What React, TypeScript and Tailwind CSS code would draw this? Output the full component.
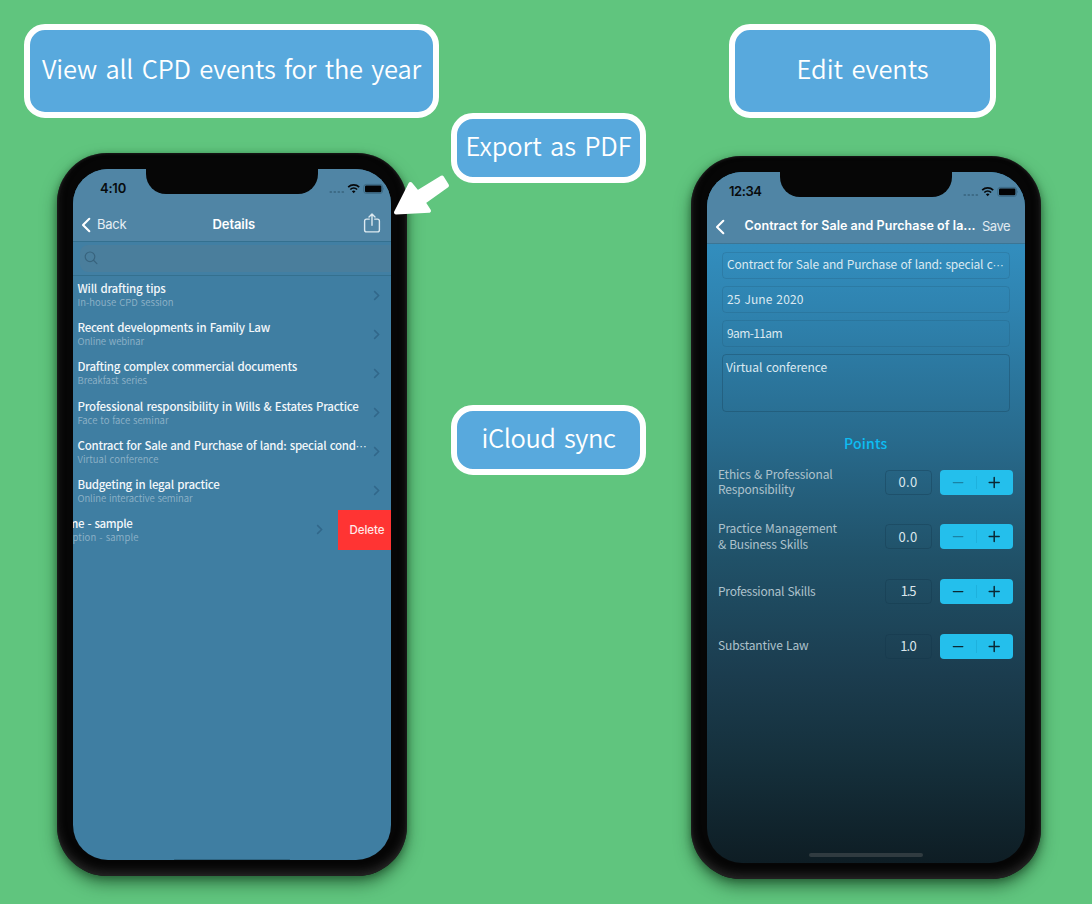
import { useLayoutEffect, useRef, type ReactNode } from "react";

/** Single line of text whose tracking is adjusted so it fills a given width. */
function Fit({ w, className = "", clipped = false, children }: { w: number; className?: string; clipped?: boolean; children: string }) {
  const ref = useRef<HTMLSpanElement>(null);
  useLayoutEffect(() => {
    const el = ref.current;
    if (!el) return;
    el.style.letterSpacing = "0px";
    const natural = el.getBoundingClientRect().width;
    el.style.letterSpacing = `${(w - natural) / (children.length + (clipped ? 1 : 0))}px`;
  }, [w, children, clipped]);
  return (
    <span ref={ref} className={`inline-block shrink-0 whitespace-nowrap ${className}`}>
      {children}
      {clipped && <span className="font-['DejaVu_Sans'] text-[11px] leading-none">⋯</span>}
    </span>
  );
}

function Callout({ className, children }: { className: string; children: ReactNode }) {
  return (
    <div
      className={`flex shrink-0 items-center justify-center border-[6px] border-white bg-[#58a9dd] pb-[7px] text-[25.5px] leading-none font-[350] text-white [word-spacing:3px] ${className}`}
    >
      {children}
    </div>
  );
}

function StatusIcons() {
  return (
    <svg width="56" height="12" viewBox="0 0 56 12" className="shrink-0">
      <g fill="#3d6b86">
        <rect x="0.5" y="8" width="2.6" height="2" rx="0.8" />
        <rect x="4.5" y="8" width="2.6" height="2" rx="0.8" />
        <rect x="8.5" y="8" width="2.6" height="2" rx="0.8" />
        <rect x="12.5" y="8" width="2.6" height="2" rx="0.8" />
      </g>
      <g fill="none" stroke="#07090b" strokeWidth="1.7">
        <path d="M19.2 4.1a8 8 0 0 1 11 0" />
        <path d="M21.3 6.5a5 5 0 0 1 6.8 0" />
      </g>
      <path d="M22.9 8.2a2.7 2.7 0 0 1 3.6 0L24.7 10.2Z" fill="#07090b" />
      <rect x="34.8" y="1.4" width="18.8" height="9" rx="2.4" fill="none" stroke="#3d6b86" strokeWidth="1" />
      <rect x="36" y="2.5" width="16.4" height="6.8" rx="1.2" fill="#020304" />
      <path d="M54.4 4.5q1.2 1.3 0 2.7Z" fill="#35617b" />
    </svg>
  );
}

function BackChevron() {
  return (
    <svg width="10" height="16" viewBox="0 0 10 16" className="shrink-0">
      <path d="M8.3 1.8 2 8l6.3 6.2" fill="none" stroke="#fff" strokeWidth="2.1" strokeLinecap="round" strokeLinejoin="round" />
    </svg>
  );
}

function ShareIcon() {
  return (
    <svg width="18" height="20" viewBox="0 0 18 20" className="mb-[2.5px] shrink-0">
      <g fill="none" stroke="#dce9f0" strokeWidth="1.4" strokeLinecap="round" strokeLinejoin="round">
        <path d="M6.3 6.1H3.6a2 2 0 0 0-2 2v8.8a2 2 0 0 0 2 2h10.8a2 2 0 0 0 2-2V8.1a2 2 0 0 0-2-2h-2.7" />
        <path d="M9 12.2V1.2M6 4l3-3 3 3" />
      </g>
    </svg>
  );
}

function Disclosure() {
  return (
    <svg width="7" height="11" viewBox="0 0 7 11" className="shrink-0">
      <path d="m1.2 1.1 4.4 4.4-4.4 4.4" fill="none" stroke="#31678a" strokeWidth="1.5" />
    </svg>
  );
}

function Phone({ screen, time, timeWidth, timePad, children }: { screen: string; time: string; timeWidth: number; timePad: string; children: ReactNode }) {
  return (
    <div className="h-[723px] w-[350.5px] shrink-0 rounded-[50px] bg-[#060606] p-4 shadow-[inset_0_-5px_8px_#242424,inset_0_0_3px_#2a2a2a,0_8px_16px_rgba(15,55,25,0.55),0_2px_7px_rgba(10,50,20,0.4)]">
      <div className={`relative flex h-[691px] w-[318.5px] flex-col overflow-hidden rounded-[35px] ${screen}`}>
        <div className={`flex h-[38px] shrink-0 items-center justify-between bg-[#5085a5] pt-[1.5px] pr-[6.5px] ${timePad}`}>
          <Fit w={timeWidth} className="font-['Inter'] text-[13px] font-semibold text-[#080b0d]">{time}</Fit>
          <StatusIcons />
        </div>
        <div className="absolute top-0 left-[73px] h-[24.5px] w-[172px] rounded-b-[20px] bg-[#060606]" />
        {children}
      </div>
    </div>
  );
}

const events = [
  { title: "Will drafting tips", tw: 88, sub: "In-house CPD session", sw: 96 },
  { title: "Recent developments in Family Law", tw: 192.5, sub: "Online webinar", sw: 66.5 },
  { title: "Drafting complex commercial documents", tw: 219.5, sub: "Breakfast series", sw: 69.5 },
  { title: "Professional responsibility in Wills & Estates Practice", tw: 281, sub: "Face to face seminar", sw: 91 },
  { title: "Contract for Sale and Purchase of land: special cond", clipped: true, tw: 289, sub: "Virtual conference", sw: 81 },
  { title: "Budgeting in legal practice", tw: 142, sub: "Online interactive seminar", sw: 115 },
];

const titleClass = "h-[15px] text-[11.5px] leading-[15px] font-medium text-[#f2f7fa] [word-spacing:1px]";
const subClass = "h-[13px] text-[9.5px] leading-[13px] font-[350] text-[#8fb3c8] [word-spacing:0.8px]";

function DetailsScreen() {
  return (
    <>
      <div className="flex h-[34px] shrink-0 items-center bg-[#5085a5] pt-px pr-[10px] pl-[8.5px] font-['Inter']">
        <div className="flex w-[130px] items-center gap-[6px]">
          <BackChevron />
          <Fit w={29.5} className="text-[13px] text-[#e6eff4]">Back</Fit>
        </div>
        <Fit w={42.5} className="ml-[1.5px] text-[13px] font-semibold text-white">Details</Fit>
        <div className="ml-auto">
          <ShareIcon />
        </div>
      </div>
      <div className="flex h-[34.5px] shrink-0 items-center border-y border-[#34708f] bg-[#417fa3] pl-[7px]">
        <div className="flex h-[27px] flex-1 items-center rounded-l-lg bg-[#4a7e9c] pl-[4px]">
          <svg width="14" height="14" viewBox="0 0 14 14">
            <g fill="none" stroke="#38637d" strokeWidth="1.2" strokeLinecap="round">
              <circle cx="6" cy="5.8" r="4.8" />
              <path d="m9.5 9.3 3.4 3.3" />
            </g>
          </svg>
        </div>
      </div>
      <div className="flex flex-col">
        {events.map((e) => (
          <div key={e.title} className="flex h-[39.1px] items-center justify-between pr-[11px] pl-[5px]">
            <div className="flex w-[290px] flex-col items-start pt-[0.5px]">
              <Fit w={e.tw} clipped={e.clipped} className={titleClass}>{e.title}</Fit>
              <Fit w={e.sw} className={subClass}>{e.sub}</Fit>
            </div>
            <Disclosure />
          </div>
        ))}
        <div className="flex h-[39.5px] items-center">
          <div className="flex w-[66px] flex-col items-end overflow-hidden">
            <Fit w={65} className={`mr-[6px] ${titleClass}`}>me - sample</Fit>
            <Fit w={66} className={subClass}>ption - sample</Fit>
          </div>
          <div className="ml-[177px]">
            <Disclosure />
          </div>
          <div className="ml-auto flex h-full w-[53px] items-center justify-center bg-[#ff3433] pt-px pl-[5px]">
            <Fit w={35} className="font-['Inter'] text-[11.5px] font-medium text-[#ffe9e9]">Delete</Fit>
          </div>
        </div>
      </div>
      <div className="mx-auto mt-auto h-px w-[116px] rounded-full bg-[#2f6481]" />
    </>
  );
}

const points = [
  { lines: ["Ethics & Professional", "Responsibility"], widths: [114.5, 76.5], value: "0.0", vw: 19, minus: "#1a83a5" },
  { lines: ["Practice Management", "& Business Skills"], widths: [119, 90], value: "0.0", vw: 19, minus: "#1a83a5" },
  { lines: ["Professional Skills"], widths: [97.5], value: "1.5", vw: 14.5, minus: "#0b2935" },
  { lines: ["Substantive Law"], widths: [90.5], value: "1.0", vw: 15.5, minus: "#0b2935" },
];

const fieldClass = "flex h-[27px] items-center rounded-[4px] border border-[#1d4c66]/20 pb-px pl-[4.5px]";
const fieldText = "text-[12px] leading-none text-[#dbe9f1] [word-spacing:1px]";

function EditScreen() {
  return (
    <>
      <div className="flex h-[33px] shrink-0 items-center bg-[#5085a5] pr-[15px] pl-[8.5px] font-['Inter']">
        <BackChevron />
        <Fit w={231} className="ml-[19.5px] text-[12.5px] font-semibold text-white">Contract for Sale and Purchase of la...</Fit>
        <Fit w={28} className="ml-auto text-[13px] text-[#e0eaf0]">Save</Fit>
      </div>
      <div className="flex flex-col gap-[7px] border-t border-[#3c7594] pt-[7.5px] pr-[15px] pl-[15px]">
        <div className={fieldClass}>
          <Fit w={276.5} clipped className={fieldText}>Contract for Sale and Purchase of land: special c</Fit>
        </div>
        <div className={fieldClass}>
          <Fit w={76.5} className={fieldText}>25 June 2020</Fit>
        </div>
        <div className={fieldClass}>
          <Fit w={55} className={fieldText}>9am-11am</Fit>
        </div>
        <div className="flex h-[58px] items-start rounded-[4px] border border-[#173f56]/35 pt-[6.5px] pl-[3.5px]">
          <Fit w={101} className={fieldText}>Virtual conference</Fit>
        </div>
      </div>
      <div className="mt-[21px] flex h-[20px] items-center justify-center">
        <Fit w={43.5} className="text-[14px] leading-none font-medium text-[#0dbdf3]">Points</Fit>
      </div>
      <div className="mt-[2px] flex flex-col">
        {points.map((p) => (
          <div key={p.lines[0]} className="flex h-[54.7px] items-center pr-[12px] pl-[11.5px]">
            <div className="flex w-[166.5px] flex-col items-start pb-[2px]">
              {p.lines.map((line, i) => (
                <Fit key={line} w={p.widths[i]} className="text-[12px] leading-[15.5px] text-[#aec2cc] [word-spacing:0.8px]">{line}</Fit>
              ))}
            </div>
            <div className="flex h-[25px] w-[47px] items-center justify-center rounded-[4px] border border-[#0f3347]/30 pb-px">
              <Fit w={p.vw} className="text-[13px] leading-none text-[#dbe6ec]">{p.value}</Fit>
            </div>
            <div className="ml-auto flex h-[25px] w-[73px] items-center rounded-[4px] bg-[#24bfec]">
              <svg width="73" height="25" viewBox="0 0 73 25">
                <path d="M13.3 12.6h9.5" stroke={p.minus} strokeWidth="1.3" strokeLinecap="round" />
                <path d="M36.5 6v13" stroke="#1eb1dd" strokeWidth="1" />
                <path d="M49.2 12.6h10M54.2 7.6v10" stroke="#0b2935" strokeWidth="1.5" strokeLinecap="round" />
              </svg>
            </div>
          </div>
        ))}
      </div>
      <div className="mx-auto mt-auto mb-[6px] h-[4px] w-[114px] rounded-full bg-[#303b40]" />
    </>
  );
}

export default function App() {
  return (
    <main className="relative flex h-[904px] w-[1092px] overflow-hidden bg-[#60c57e] font-['Noto_Sans_CJK_KR','Noto_Sans',sans-serif]">
      <section className="flex w-[451px] shrink-0 flex-col pt-[24px]">
        <Callout className="ml-[24px] h-[94px] w-[415px] rounded-[21px]">
          <Fit w={379}>View all CPD events for the year</Fit>
        </Callout>
        <div className="mt-[35px] ml-[56.5px]">
          <Phone screen="bg-[#3f7ea2]" time="4:10" timeWidth={26} timePad="pl-[27.5px]">
            <DetailsScreen />
          </Phone>
        </div>
      </section>

      <section className="flex w-[195px] shrink-0 flex-col gap-[222px] pt-[113px]">
        <Callout className="h-[70px] w-[195px] rounded-[22px]">
          <Fit w={166}>Export as PDF</Fit>
        </Callout>
        <Callout className="h-[70px] w-[195px] rounded-[22px]">
          <Fit w={134}>iCloud sync</Fit>
        </Callout>
      </section>

      <section className="flex flex-1 flex-col pt-[24px]">
        <Callout className="ml-[83px] h-[94px] w-[267px] rounded-[21px]">
          <Fit w={132}>Edit events</Fit>
        </Callout>
        <div className="mt-[38.2px] ml-[44.5px]">
          <Phone
            screen="bg-[linear-gradient(#338fc0_0%,#328dbd_11%,#2f84b1_19%,#286a8c_39%,#205168_56%,#1b3c4e_73%,#15303c_85%,#0e1d24_100%)]"
            time="12:34"
            timeWidth={32.5}
            timePad="pl-[22.5px]"
          >
            <EditScreen />
          </Phone>
        </div>
      </section>

      <svg className="absolute top-[172px] left-[390px]" width="64" height="46" viewBox="0 0 64 46">
        <path
          d="M6 40.5 20.5 12l7 8.5L52 5.5l5 8L33.5 30.3l5.5 8.5Z"
          fill="#fff"
          stroke="#fff"
          strokeWidth="4"
          strokeLinejoin="round"
        />
      </svg>
    </main>
  );
}
